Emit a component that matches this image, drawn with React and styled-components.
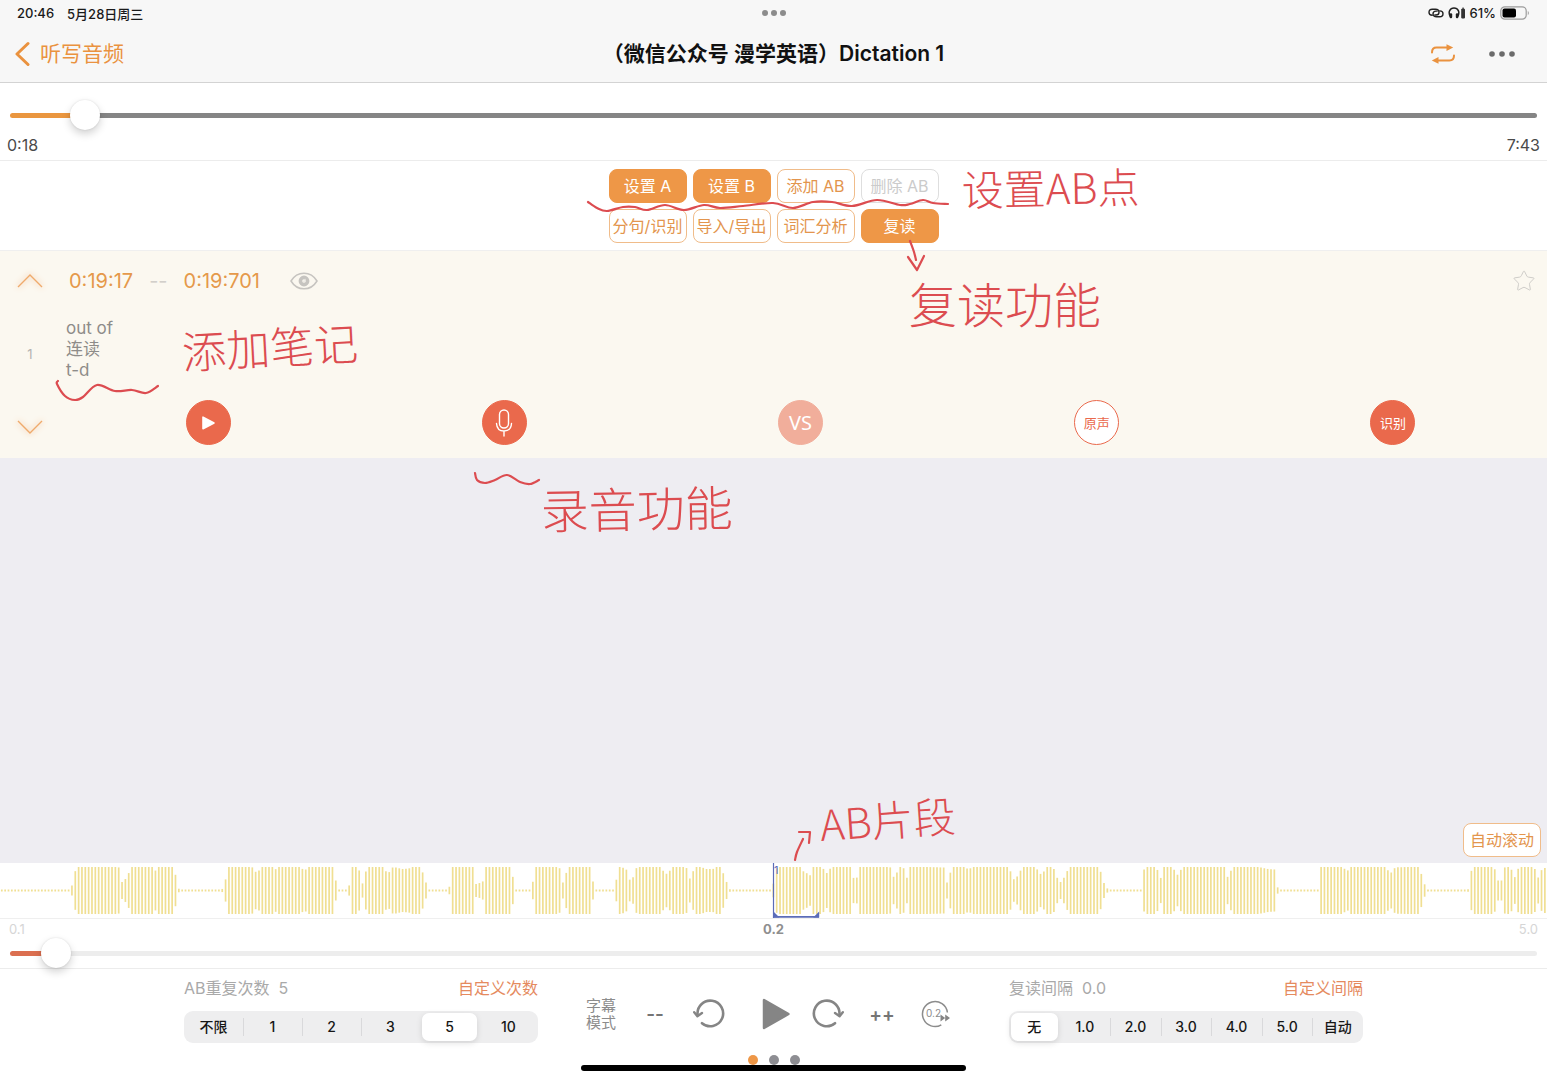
import React, { useState } from 'react'
import styled, { createGlobalStyle, css } from 'styled-components';
import { Star } from 'lucide-react';

const MAX_BAR = 47;
const BAR_STEP = 3.34;

// envelope of the recording: [x, height], anything between two points is interpolated
const ENVELOPE = [
  [0, 2], [70, 2], [72, 10], [75, 38], [79, 48], [116, 48], [119, 46], [122, 17], [126, 24], [129, 36], [132, 48],
  [153, 48], [156, 38], [159, 48], [173, 48], [176, 28], [179, 2], [222, 2], [225, 16], [228, 48], [251, 48],
  [254, 44], [256, 36], [259, 40], [262, 48], [273, 48], [276, 42], [279, 48], [300, 48], [303, 42], [306, 42],
  [308, 48], [333, 48], [336, 18], [339, 2], [346, 2], [349, 8], [352, 48], [356, 48], [359, 42], [362, 10],
  [365, 34], [368, 48], [383, 48], [386, 38], [389, 36], [392, 46], [396, 46], [402, 43], [409, 44], [412, 48],
  [419, 48], [423, 35], [426, 16], [429, 2], [449, 2], [452, 48], [473, 48], [476, 13], [479, 16], [482, 8],
  [485, 48], [510, 48], [513, 26], [516, 2], [530, 2], [533, 18], [536, 48], [557, 48], [560, 44], [563, 15],
  [566, 34], [569, 48], [590, 48], [593, 18], [596, 2], [613, 2], [616, 18], [619, 48], [626, 44], [630, 20],
  [633, 26], [637, 48], [661, 48], [664, 36], [667, 33], [670, 40], [673, 48], [686, 48], [690, 23], [693, 38],
  [696, 48], [700, 48], [706, 43], [713, 43], [717, 48], [721, 48], [724, 30], [727, 15], [730, 2], [770, 2],
  [774, 16], [777, 48], [801, 48], [804, 36], [808, 34], [810, 30], [813, 48], [822, 48], [825, 38], [828, 33],
  [831, 48], [850, 48], [854, 22], [857, 26], [860, 48], [890, 48], [893, 26], [897, 36], [900, 48], [903, 48],
  [907, 25], [910, 48], [944, 46], [947, 16], [950, 34], [953, 48], [965, 48], [968, 42], [974, 48], [1009, 48],
  [1013, 22], [1016, 24], [1020, 38], [1023, 48], [1035, 48], [1041, 32], [1044, 38], [1047, 48], [1053, 48],
  [1057, 26], [1061, 16], [1064, 26], [1067, 38], [1070, 48], [1098, 48], [1101, 36], [1104, 15], [1108, 2],
  [1142, 2], [1144, 42], [1148, 48], [1154, 48], [1158, 40], [1161, 24], [1164, 48], [1171, 48], [1174, 42],
  [1178, 30], [1181, 42], [1184, 48], [1225, 48], [1228, 24], [1231, 40], [1234, 48], [1256, 48], [1268, 43],
  [1275, 42], [1278, 2], [1318, 2], [1321, 48], [1340, 48], [1348, 40], [1351, 48], [1386, 48], [1389, 36],
  [1392, 36], [1395, 46], [1418, 48], [1422, 30], [1425, 10], [1428, 2], [1468, 2], [1471, 38], [1474, 48],
  [1492, 48], [1495, 42], [1498, 20], [1502, 20], [1505, 48], [1510, 48], [1515, 26], [1519, 48], [1534, 48],
  [1538, 25], [1541, 40], [1547, 48],
];

const heightAt = (x) => {
  const next = ENVELOPE.findIndex(([px]) => px >= x);
  if (next <= 0) return ENVELOPE[0][1];
  const [x0, h0] = ENVELOPE[next - 1];
  const [x1, h1] = ENVELOPE[next];
  return h0 + ((h1 - h0) * (x - x0)) / (x1 - x0);
};

const BARS = [];
for (let x = 1.8; x < 1547; x += BAR_STEP) {
  BARS.push({ x, h: Math.min(heightAt(x), MAX_BAR) });
}

// smooth pen line through a list of points
const penLine = (pts) =>
  pts.slice(0, -1).reduce((d, p1, i) => {
    const p0 = pts[i - 1] || p1;
    const p2 = pts[i + 1];
    const p3 = pts[i + 2] || p2;
    const a = [p1[0] + (p2[0] - p0[0]) / 6, p1[1] + (p2[1] - p0[1]) / 6];
    const b = [p2[0] - (p3[0] - p1[0]) / 6, p2[1] - (p3[1] - p1[1]) / 6];
    return `${d} C${a.join(' ')} ${b.join(' ')} ${p2.join(' ')}`;
  }, `M${pts[0].join(' ')}`);

const PEN_LINES = [
  [[588, 202], [597, 208], [607, 211], [623, 207], [635, 207], [647, 210], [665, 205], [684, 210], [704, 205],
    [720, 208], [743, 206], [773, 203], [793, 208], [813, 202], [832, 202], [852, 206], [877, 200], [900, 205],
    [910, 204], [923, 200], [933, 203], [948, 204]],
  [[910, 241], [914, 252], [916, 260]],
  [[58, 381], [57, 384], [65, 396], [75, 400], [83, 397], [97, 385], [115, 391], [132, 390], [146, 393], [158, 386]],
  [[475, 473], [477, 480], [485, 483], [495, 480], [507, 475], [520, 482], [530, 484], [539, 480]],
  [[795, 860], [797, 852], [803, 839]],
];

const REPEAT_OPTIONS = ['不限', '1', '2', '3', '5', '10'];
const GAP_OPTIONS = ['无', '1.0', '2.0', '3.0', '4.0', '5.0', '自动'];

const Segments = ({ name, label, options, initial }) => {
  const [value, setValue] = useState(initial);
  return (
    <SegmentGroup role='radiogroup' aria-label={label}>
      {options.map((option, i) => (
        <Segment
          key={option}
          $active={option === value}
          $divider={i > 0 && option !== value && options[i - 1] !== value}
        >
          <input
            type='radio'
            name={name}
            value={option}
            checked={option === value}
            onChange={() => setValue(option)}
          />
          <span>{option}</span>
        </Segment>
      ))}
    </SegmentGroup>
  )
}

const TurnIcon = ({ flip }) => (
  <svg width='32' height='32' viewBox='0 0 32 32' fill='none' stroke='#858585' strokeWidth='2.6' strokeLinecap='round' strokeLinejoin='round'>
    <g transform={flip ? 'translate(32 0) scale(-1 1)' : undefined}>
      <path d='M4.6 17A12.8 12.8 0 1 1 9 25.2' />
      <path d='M1.2 14.2L4.4 18.2L9 15' strokeWidth='2.4' />
    </g>
  </svg>
)

const Annotations = () => (
  <PenLayer viewBox='0 0 1547 1080' preserveAspectRatio='xMidYMin meet'>
    {PEN_LINES.map((pts, i) => <path key={i} d={penLine(pts)} />)}
    <path d='M908 257L917 270L924 256' />
    <path d='M799 832L810 832L809 843' />
    <PenText x='962' y='206' $size={42} transform='rotate(-1 962 206)'>设置AB点</PenText>
    <PenText x='909' y='323' $size={48}>复读功能</PenText>
    <PenText x='183' y='369' $size={44} transform='rotate(-3 183 369)'>添加笔记</PenText>
    <PenText x='541' y='529' $size={48} transform='rotate(-1 541 529)'>录音功能</PenText>
    <PenText x='821' y='841' $size={42} transform='rotate(-4 821 841)'>AB片段</PenText>
  </PenLayer>
)

const App = () => {
  const [position, setPosition] = useState(18.5);
  const [zoom, setZoom] = useState(0.2);

  return (
    <>
      <GlobalStyle />
      <Page lang='zh-CN'>
        <Header>
          <StatusBar>
            <StatusSide>
              <span>20:46</span>
              <span>5月28日周三</span>
            </StatusSide>
            <Multitask aria-label='多任务'><i /><i /><i /></Multitask>
            <StatusSide $end>
              <svg width='16' height='12' viewBox='0 0 16 12' fill='none' stroke='#222' strokeWidth='1.4' strokeLinecap='round'>
                <path d='M4.2 8.2C2 8.2 1 7 1 5.3C1 3.4 2.4 2.2 4.3 2.2H7.5C9.6 2.2 11 3.4 11 5.2C11 7 9.8 8 8 8H6.8' />
                <path d='M11.8 3.9C14 3.9 15 5 15 6.7C15 8.6 13.6 9.8 11.7 9.8H8.5C6.4 9.8 5 8.6 5 6.9C5 5.2 6.2 4.1 8 4.1H9.2' />
              </svg>
              <svg width='18' height='12' viewBox='0 0 18 12'>
                <path d='M2.4 9.6C-.4 5 2 1 6 1S12.400 5 9.600 9.600' fill='none' stroke='#222' strokeWidth='1.500' />
                <rect x='1.600' y='6.200' width='2.600' height='5' rx='1.200' fill='#222' />
                <rect x='7.800' y='6.200' width='2.600' height='5' rx='1.200' fill='#222' />
                <rect x='13.200' y='1.800' width='3.800' height='9.600' rx='.8' fill='#333' />
                <rect x='14.200' y='.6' width='1.800' height='1.400' fill='#555' />
              </svg>
              <span>61%</span>
              <svg width='30' height='14' viewBox='0 0 30 14'>
                <rect x='.8' y='.8' width='25.400' height='12.400' rx='4' fill='none' stroke='#9c9c9c' strokeWidth='1.200' />
                <rect x='2.500' y='2.500' width='13.500' height='9' rx='2' fill='#000' />
                <path d='M27.800 5V9.200C29.200 8.600 29.200 5.600 27.800 5Z' fill='#9c9c9c' />
              </svg>
            </StatusSide>
          </StatusBar>
          <NavBar>
            <BackLink href='#library'>
              <svg width='16' height='26' viewBox='0 0 16 26' fill='none' stroke='currentColor' strokeWidth='3' strokeLinecap='round' strokeLinejoin='round'>
                <path d='M14 2.500L3 13L14 23.500' />
              </svg>
              听写音频
            </BackLink>
            <Title>（微信公众号 漫学英语）Dictation 1</Title>
            <NavActions>
              <PlainButton aria-label='循环'>
                <svg width='24' height='20' viewBox='0 0 24 20' fill='none' stroke='#ea923f' strokeWidth='2' strokeLinecap='round'>
                  <path d='M1 8.500C1 5.400 2.200 3.600 5.500 3.600H16' />
                  <path d='M23 11.500C23 14.600 21.800 16.400 18.500 16.400H7' />
                  <path d='M15.500 .2L22.200 3.600L15.500 7Z' fill='#ea923f' stroke='none' />
                  <path d='M7.500 13L.8 16.400L7.500 19.800Z' fill='#ea923f' stroke='none' />
                </svg>
              </PlainButton>
              <PlainButton aria-label='更多'>
                <svg width='26' height='6' viewBox='0 0 26 6' fill='#6b6b6b'>
                  <circle cx='3' cy='3' r='2.800' />
                  <circle cx='13' cy='3' r='2.800' />
                  <circle cx='23' cy='3' r='2.800' />
                </svg>
              </PlainButton>
            </NavActions>
          </NavBar>
        </Header>

        <ProgressSection>
          <Slider
            type='range'
            aria-label='播放进度'
            min='0'
            max='463'
            step='0.5'
            value={position}
            onChange={(e) => setPosition(Number(e.target.value))}
            $fill='#ea963f'
            $rest='#858585'
            style={{ '--ratio': position / 463 }}
          />
          <ProgressTimes>
            <span>0:18</span>
            <span>7:43</span>
          </ProgressTimes>
        </ProgressSection>

        <ToolSection>
          <ToolButton $filled>设置 A</ToolButton>
          <ToolButton $filled>设置 B</ToolButton>
          <ToolButton>添加 AB</ToolButton>
          <ToolButton disabled>删除 AB</ToolButton>
          <ToolButton>分句/识别</ToolButton>
          <ToolButton>导入/导出</ToolButton>
          <ToolButton>词汇分析</ToolButton>
          <ToolButton $filled>复读</ToolButton>
        </ToolSection>

        <Clip>
          <ClipSide>
            <PlainButton aria-label='上一句'>
              <Chevron width='32' height='24' viewBox='0 0 32 24'><path d='M4 18L16 6L28 18' /></Chevron>
            </PlainButton>
            <span>1</span>
            <PlainButton aria-label='下一句'>
              <Chevron width='32' height='24' viewBox='0 0 32 24'><path d='M4 6L16 18L28 6' /></Chevron>
            </PlainButton>
          </ClipSide>
          <ClipBody>
            <ClipTimes>
              <span>0:19:17</span>
              <Dash>--</Dash>
              <span>0:19:701</span>
              <EyeButton aria-label='显示'>
                <svg width='28' height='18' viewBox='0 0 28 18' fill='none' stroke='#c6c4c0'>
                  <path d='M1 9C4 4 8.500 1.200 14 1.200S24 4 27 9C24 14 19.500 16.800 14 16.800S4 14 1 9Z' strokeWidth='1.500' />
                  <circle cx='14' cy='9' r='3.600' strokeWidth='3.600' />
                  <path d='M15.200 6.800V9.200H13' stroke='#e6e4e0' strokeWidth='1' />
                </svg>
              </EyeButton>
              <StarButton aria-label='收藏'>
                <Star size={24} strokeWidth={1} color='#cfcdc9' />
              </StarButton>
            </ClipTimes>
            <Note aria-label='笔记' rows={3} defaultValue={'out of\n连读\nt-d'} />
            <ClipActions>
              <RoundButton aria-label='播放'>
                <svg width='14' height='16' viewBox='0 0 14 16'>
                  <path d='M2 2.200V13.800L13 8Z' fill='#fff' stroke='#fff' strokeWidth='1.600' strokeLinejoin='round' />
                </svg>
              </RoundButton>
              <RoundButton aria-label='录音'>
                <svg width='18' height='28' viewBox='0 0 18 28' fill='none' stroke='#fff' strokeWidth='1.400' strokeLinecap='round'>
                  <rect x='4.500' y='1' width='9' height='18' rx='4.500' />
                  <path d='M1.500 14.500C1.800 19.500 4.800 22 9 22S16.200 19.500 16.500 14.500M9 22V27' />
                </svg>
              </RoundButton>
              <RoundButton $big disabled>VS</RoundButton>
              <RoundButton $outline>原声</RoundButton>
              <RoundButton>识别</RoundButton>
            </ClipActions>
          </ClipBody>
        </Clip>

        <EmptyArea>
          <ToolButton>自动滚动</ToolButton>
        </EmptyArea>

        <Wave viewBox='0 0 1547 55' preserveAspectRatio='xMidYMid slice' role='img' aria-label='波形'>
          {BARS.map(({ x, h }) => (
            <line key={x} x1={x} x2={x} y1={27.5 - h / 2} y2={27.5 + h / 2} />
          ))}
          <path d='M773.500 0V55' stroke='#5b6cb8' strokeWidth='1.200' fill='none' />
          <path d='M773.500 53.800H819' stroke='#5b6cb8' strokeWidth='1.800' fill='none' />
          <path d='M773.500 48.500V54.500H779.500ZM819.200 48.500V54.500H813.200Z' fill='#5b6cb8' />
          <WaveMark x='774' y='11'>1</WaveMark>
        </Wave>

        <ZoomSection>
          <ZoomLabels>
            <span>0.1</span>
            <b>{zoom.toFixed(1)}</b>
            <span>5.0</span>
          </ZoomLabels>
          <Slider
            type='range'
            aria-label='波形缩放'
            min='0.1'
            max='5'
            step='0.1'
            value={zoom}
            onChange={(e) => setZoom(Number(e.target.value))}
            $fill='#db6f50'
            $rest='#ededed'
            style={{ '--ratio': (zoom - 0.1) / 4.9 }}
          />
        </ZoomSection>

        <Footer>
          <Controls>
            <Setting>
              <SettingHead>
                <span>AB重复次数&nbsp; 5</span>
                <a href='#count'>自定义次数</a>
              </SettingHead>
              <Segments name='repeat' label='AB重复次数' options={REPEAT_OPTIONS} initial='5' />
            </Setting>
            <Player>
              <PlayerButton $mode>字幕<br />模式</PlayerButton>
              <PlayerButton>--</PlayerButton>
              <PlayerButton aria-label='后退'><TurnIcon /></PlayerButton>
              <PlayerButton aria-label='播放' $wide>
                <svg width='44' height='34' viewBox='0 0 44 34'>
                  <path d='M17 3V31L41.500 17Z' fill='#858585' stroke='#858585' strokeWidth='2.500' strokeLinejoin='round' />
                </svg>
              </PlayerButton>
              <PlayerButton aria-label='前进'><TurnIcon flip /></PlayerButton>
              <PlayerButton>++</PlayerButton>
              <PlayerButton aria-label='倍速'>
                <svg width='30' height='28' viewBox='0 0 30 28'>
                  <path d='M26.400 12.500A12.500 12.500 0 1 0 20.300 24.800' fill='none' stroke='#8c8c8c' strokeWidth='1.500' />
                  <SpeedText x='5' y='17'>0.2</SpeedText>
                  <path d='M19.500 14.500L24.200 18L19.500 21.500ZM24.200 14.500L29 18L24.200 21.500Z' fill='#858585' />
                </svg>
              </PlayerButton>
            </Player>
            <Setting>
              <SettingHead>
                <span>复读间隔&nbsp; 0.0</span>
                <a href='#gap'>自定义间隔</a>
              </SettingHead>
              <Segments name='gap' label='复读间隔' options={GAP_OPTIONS} initial='无' />
            </Setting>
          </Controls>
          <Pager>
            <PagerDot $active aria-label='第1页' />
            <PagerDot aria-label='第2页' />
            <PagerDot aria-label='第3页' />
          </Pager>
          <HomeBar />
        </Footer>

        <Annotations />
      </Page>
    </>
  )
}

const GlobalStyle = createGlobalStyle`
  * {
    box-sizing: border-box;
  }

  body {
    margin: 0;
    background: #fff;
    font-family: Inter, "Noto Sans CJK SC", sans-serif;
  }

  button, input, textarea {
    font-family: inherit;
  }
`;

const Page = styled.div`
  position: relative;
  display: flex;
  flex-direction: column;
  min-height: 100vh;
`;

const Header = styled.header`
  background: #f7f7f7;
  border-bottom: 1px solid #d3d3d3;
`;

const StatusBar = styled.div`
  display: grid;
  grid-template-columns: 1fr auto 1fr;
  align-items: center;
  height: 26px;
  padding: 0 17px;
  font-size: 13px;
  font-weight: 500;
  color: #1a1a1a;
`;

const StatusSide = styled.div`
  display: flex;
  align-items: center;
  gap: ${(p) => (p.$end ? '4px' : '13px')};
  justify-content: ${(p) => (p.$end ? 'flex-end' : 'flex-start')};
`;

const Multitask = styled.div`
  display: flex;
  gap: 3px;

  i {
    width: 6px;
    height: 6px;
    border-radius: 50%;
    background: #8c8c8c;
  }
`;

const NavBar = styled.nav`
  display: grid;
  grid-template-columns: 1fr auto 1fr;
  align-items: center;
  height: 56px;
  padding: 0 14px;
`;

const BackLink = styled.a`
  display: flex;
  align-items: center;
  gap: 10px;
  font-size: 21px;
  line-height: 24px;
  color: #ea923f;
  text-decoration: none;
`;

const Title = styled.h1`
  margin: 0;
  font-size: 21px;
  font-weight: 600;
  line-height: 24px;
  color: #111;
`;

const NavActions = styled.div`
  display: flex;
  justify-content: flex-end;
  align-items: center;
  gap: 34px;
  padding-right: 18px;
`;

const PlainButton = styled.button`
  display: flex;
  padding: 0;
  border: 0;
  background: none;
  cursor: pointer;
`;

const ProgressSection = styled.section`
  padding: 17px 0 5px;
  border-bottom: 1px solid #ececec;
`;

const track = css`
  height: 5px;
  border-radius: 3px;
  background: linear-gradient(to right, ${(p) => p.$fill} var(--stop), ${(p) => p.$rest} var(--stop));
`;

const thumb = css`
  width: 30px;
  height: 30px;
  border: 0;
  border-radius: 50%;
  background: #fff;
  box-shadow: 0 4px 8px rgba(0, 0, 0, 0.18), 0 0 2px rgba(0, 0, 0, 0.12);
`;

const Slider = styled.input`
  --stop: calc(15px + (100% - 30px) * var(--ratio));
  display: block;
  appearance: none;
  width: calc(100% - 20px);
  height: 30px;
  margin: 0 10px;
  background: none;

  &::-webkit-slider-runnable-track {
    ${track}
  }

  &::-webkit-slider-thumb {
    appearance: none;
    margin-top: -13px;
    ${thumb}
  }

  &::-moz-range-track {
    ${track}
  }

  &::-moz-range-thumb {
    ${thumb}
  }
`;

const ProgressTimes = styled.div`
  display: flex;
  justify-content: space-between;
  margin-top: 5px;
  padding: 0 7px;
  font-size: 16px;
  line-height: 20px;
  color: #4a4a4a;
`;

const ToolSection = styled.section`
  display: grid;
  grid-template-columns: repeat(4, 78px);
  justify-content: center;
  gap: 6px;
  padding: 8px 0 7px;
  border-bottom: 1px solid #efefef;
`;

const ToolButton = styled.button`
  width: 78px;
  height: 34px;
  padding: 0;
  border: 1px solid ${(p) => (p.$filled ? '#ee9747' : '#f0bc8a')};
  border-radius: 8px;
  background: ${(p) => (p.$filled ? '#ee9747' : '#fff')};
  color: ${(p) => (p.$filled ? '#fff' : '#e3954d')};
  font-size: 16px;
  line-height: 20px;
  white-space: nowrap;
  cursor: pointer;

  &:disabled {
    border-color: #dedede;
    color: #cbcbcb;
  }
`;

const Clip = styled.section`
  display: flex;
  background: #fbf8f0;
`;

const ClipSide = styled.div`
  display: flex;
  flex-direction: column;
  align-items: center;
  justify-content: space-between;
  width: 60px;
  padding: 18px 0 19px;
  font-size: 13px;
  color: #b5b3b0;
`;

const Chevron = styled.svg`
  fill: none;
  stroke: #efaa6c;
  stroke-width: 1.4;
  filter: drop-shadow(0 0 3px #f5b98a);
`;

const ClipBody = styled.div`
  flex: 1;
  padding: 15px 6px 13px 0;
`;

const ClipTimes = styled.div`
  display: flex;
  align-items: center;
  gap: 16px;
  height: 30px;
  padding: 0 5px 0 9px;
  font-size: 20px;
  color: #e5994a;
`;

const Dash = styled.span`
  color: #d2cfca;
`;

const EyeButton = styled(PlainButton)`
  margin-left: 14px;
`;

const StarButton = styled(PlainButton)`
  margin-left: auto;
`;

const Note = styled.textarea`
  display: block;
  width: 100%;
  height: 63px;
  margin: 22px 0 19px;
  padding: 0 6px;
  border: 0;
  outline: 0;
  resize: none;
  overflow: hidden;
  background: none;
  font-size: 17px;
  line-height: 21px;
  color: #8e8c89;
`;

const ClipActions = styled.div`
  display: grid;
  grid-template-columns: repeat(5, 1fr);
  justify-items: center;
`;

const RoundButton = styled.button`
  display: flex;
  align-items: center;
  justify-content: center;
  width: 45px;
  height: 45px;
  padding: 0;
  border: 1px solid #ea694c;
  border-radius: 50%;
  background: ${(p) => (p.$outline ? '#fff' : '#ea694c')};
  color: ${(p) => (p.$outline ? '#ea694c' : '#fff')};
  font-size: ${(p) => (p.$big ? '20px' : '13px')};
  font-family: ${(p) => (p.$big ? '"Noto Sans", sans-serif' : 'inherit')};
  line-height: 16px;
  cursor: pointer;

  &:disabled {
    border-color: #f1ae9b;
    background: #f1ae9b;
  }
`;

const EmptyArea = styled.main`
  display: flex;
  flex: 1;
  align-items: flex-end;
  justify-content: flex-end;
  min-height: 120px;
  padding: 6px;
  background: #eeedf2;
`;

const Wave = styled.svg`
  display: block;
  width: 100%;
  height: 55px;

  line {
    stroke: #f0df92;
    stroke-width: 1.7;
  }
`;

const WaveMark = styled.text`
  font-size: 11px;
  fill: #5b6cb8;
`;

const ZoomSection = styled.section`
  border-top: 1px solid #efefef;
  border-bottom: 1px solid #ececec;
`;

const ZoomLabels = styled.div`
  display: grid;
  grid-template-columns: 1fr auto 1fr;
  height: 19px;
  padding: 0 9px;
  font-size: 13px;
  line-height: 20px;
  color: #d6d6d6;

  b {
    color: #8f8f8f;
  }

  span:last-child {
    text-align: right;
  }
`;

const Footer = styled.footer`
  display: flex;
  flex-direction: column;
  align-items: center;
  padding: 7px 0 9px;
`;

const Controls = styled.div`
  display: grid;
  grid-template-columns: 1fr 471px 1fr;
  width: 100%;
  padding: 0 184px;
`;

const Setting = styled.section`
  display: flex;
  flex-direction: column;
  gap: 11px;
`;

const SettingHead = styled.div`
  display: flex;
  justify-content: space-between;
  font-size: 16px;
  line-height: 24px;
  color: #a9a9a9;

  a {
    color: #e58a5e;
    text-decoration: none;
  }
`;

const SegmentGroup = styled.div`
  display: flex;
  height: 32px;
  border-radius: 9px;
  background: #eeeeef;
`;

const Segment = styled.label`
  display: flex;
  flex: 1;
  align-items: center;
  padding: 2px 0;
  cursor: pointer;

  &::before {
    content: '';
    width: 1px;
    height: 18px;
    background: ${(p) => (p.$divider ? '#d9d9db' : 'transparent')};
  }

  input {
    position: absolute;
    opacity: 0;
    pointer-events: none;
  }

  span {
    display: flex;
    flex: 1;
    align-items: center;
    justify-content: center;
    height: 28px;
    margin: 0 2px 0 1px;
    border-radius: 7px;
    font-size: 14px;
    font-weight: 500;
    line-height: 16px;
    color: #161616;
    ${(p) => p.$active && css`
      background: #fff;
      box-shadow: 0 2px 6px rgba(0, 0, 0, 0.12);
    `}
  }
`;

const Player = styled.div`
  display: flex;
  align-self: end;
  justify-content: center;
  height: 58px;
  padding-right: 10px;
`;

const PlayerButton = styled.button`
  display: flex;
  align-items: center;
  justify-content: center;
  width: ${(p) => (p.$wide ? '65px' : '54px')};
  padding: 0;
  border: 0;
  background: none;
  color: ${(p) => (p.$mode ? '#8c8c8c' : '#757575')};
  font-size: ${(p) => (p.$mode ? '15px' : '19px')};
  font-weight: ${(p) => (p.$mode ? 400 : 600)};
  line-height: 17px;
  cursor: pointer;
`;

const SpeedText = styled.text`
  font-size: 10px;
  font-weight: 400;
  fill: #8c8c8c;
`;

const Pager = styled.div`
  display: flex;
  gap: 11px;
  margin-top: 12px;
`;

const PagerDot = styled.button`
  width: 10px;
  height: 10px;
  padding: 0;
  border: 0;
  border-radius: 50%;
  background: ${(p) => (p.$active ? '#ee9747' : '#8e8e93')};
`;

const HomeBar = styled.div`
  width: 385px;
  height: 6px;
  border-radius: 3px;
  background: #000;
`;

const PenLayer = styled.svg`
  position: absolute;
  top: 0;
  left: 0;
  width: 100%;
  height: 100%;
  pointer-events: none;

  path {
    fill: none;
    stroke: #dc4c50;
    stroke-width: 2.2;
    stroke-linecap: round;
    stroke-linejoin: round;
  }
`;

const PenText = styled.text`
  font-family: "Noto Sans CJK SC", sans-serif;
  font-size: ${(p) => p.$size}px;
  font-weight: 300;
  fill: #dc4c50;
`;

export default App
